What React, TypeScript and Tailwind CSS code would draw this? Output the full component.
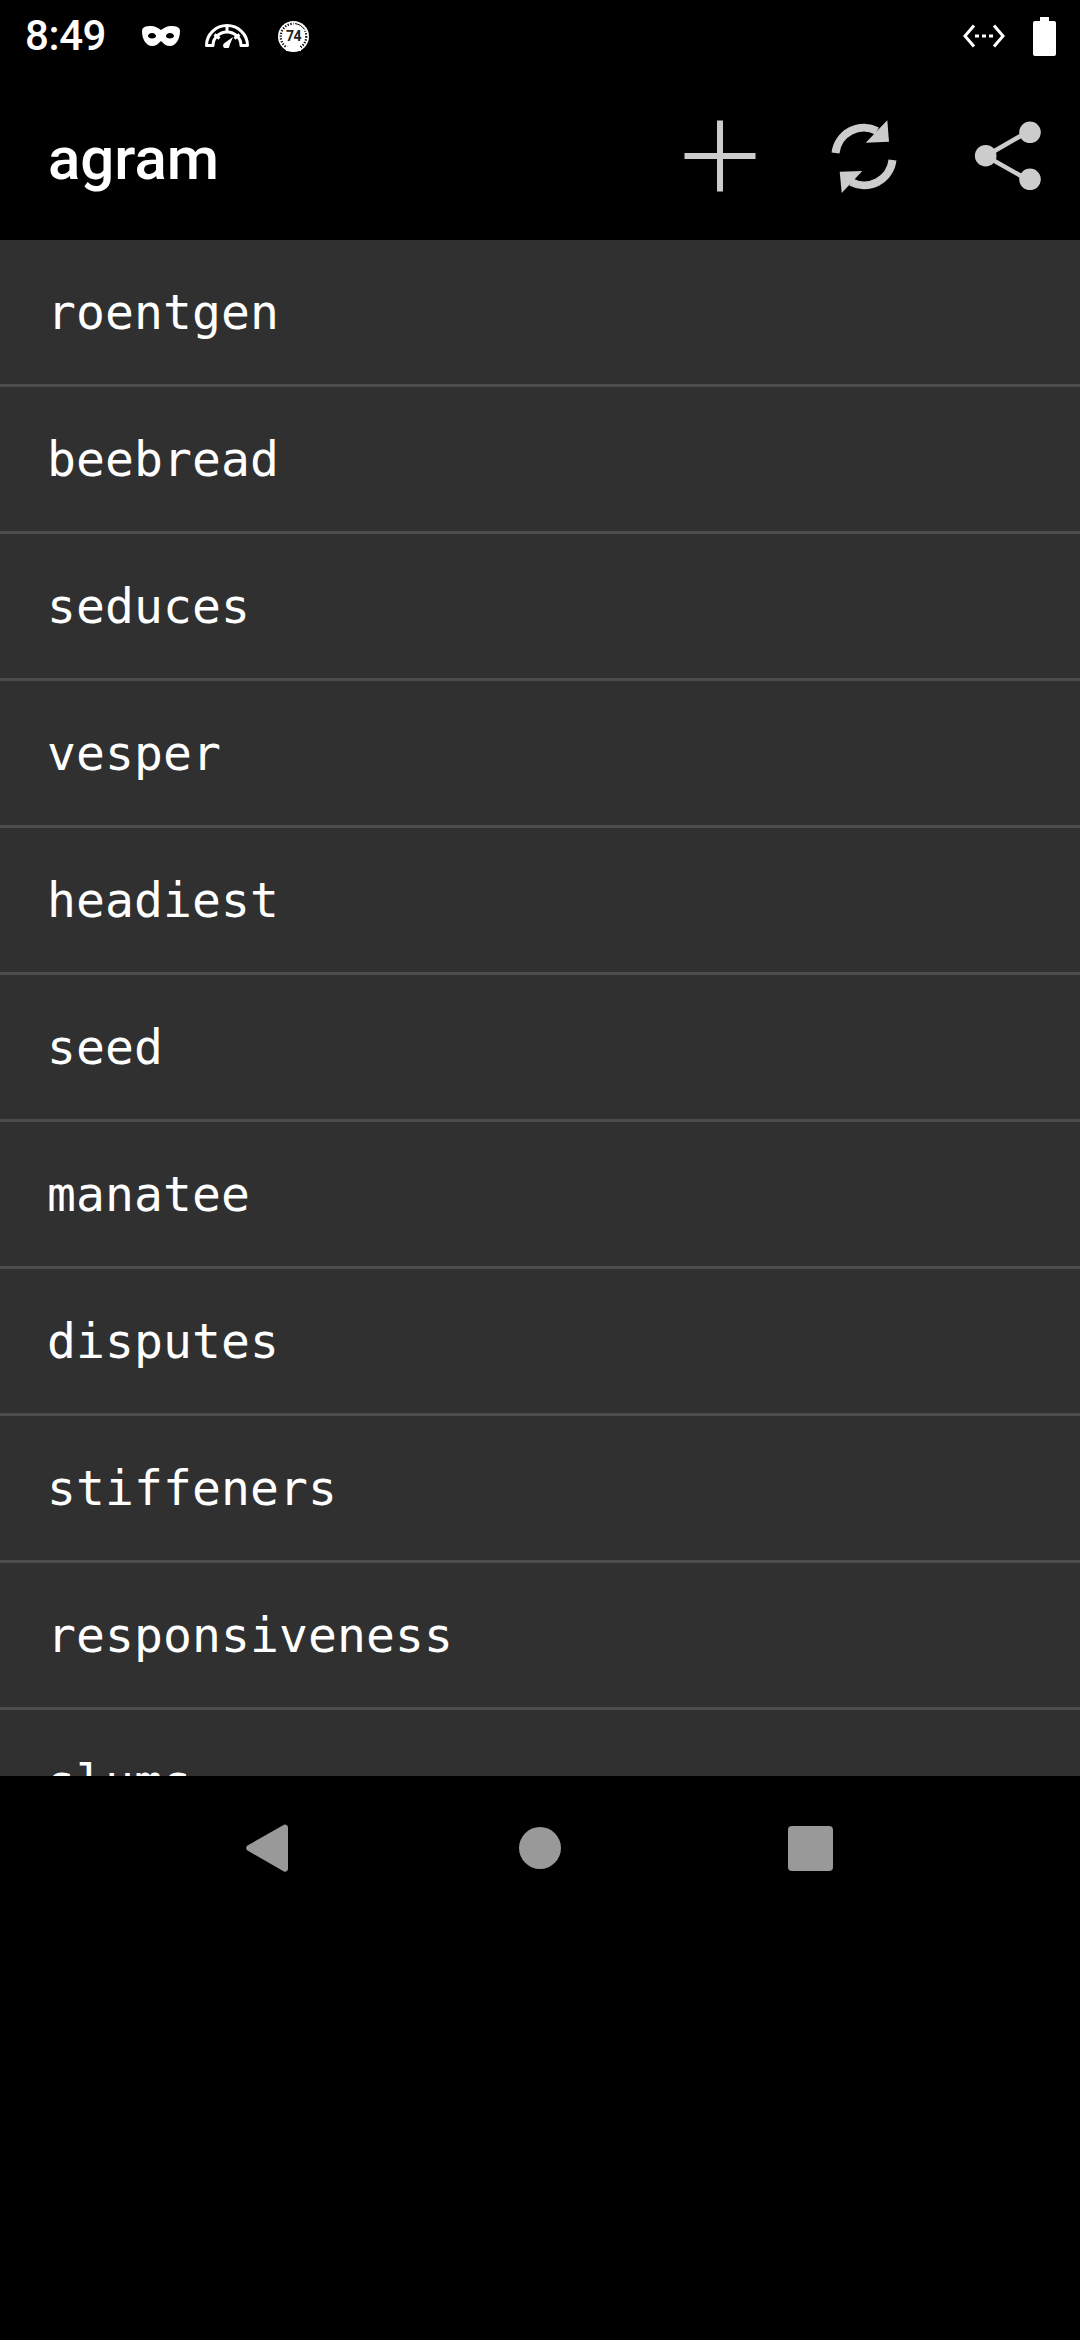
import React from "react";

const words = ["roentgen","beebread","seduces","vesper","headiest","seed","manatee","disputes","stiffeners","responsiveness","slums"];

function Mask() {
  return (
    <svg width="38" height="20" viewBox="0 0 38 20" className="block">
      <path fillRule="evenodd" fill="#fff" d="M9 0C13 0 16 2 19 4C22 2 25 0 29 0C34 0 38 1 38 5C38 13 34 20 28 20C24 20 22 18 19 15C16 18 14 20 10 20C4 20 0 13 0 5C0 1 4 0 9 0ZM10 7C7.5 7 6 8.5 6 10C6 11.5 8 12.5 10 12.5C12.5 12.5 14 11.5 14 10C14 8.5 12.5 7 10 7ZM28 7C25.5 7 24 8.5 24 10C24 11.5 25.5 12.5 28 12.5C30 12.5 32 11.5 32 10C32 8.5 30.5 7 28 7Z" />
    </svg>
  );
}

function Gauge() {
  return (
    <svg width="44" height="24" viewBox="0 0 44 24" className="block" fill="none" stroke="#fff" strokeWidth="3">
      <path d="M1.5 21.5A20.5 20 0 0 1 42.5 21.5H36A14 13.5 0 0 0 8 21.5Z" strokeLinejoin="round" />
      <path d="M9.5 10.5L14.5 14.5M22 1.5V8M34.5 10.5L29.5 14.5" />
      <path d="M28 13L24.5 21.5A3.2 3.2 0 1 1 19.5 19Z" fill="#fff" stroke="none" />
    </svg>
  );
}

function Badge() {
  return (
    <div className="relative h-[31px] w-[31px]">
      <svg width="31" height="31" viewBox="0 0 31 31" className="block">
        <circle cx="15.5" cy="15.5" r="15.5" fill="#fff" />
        <circle cx="15.5" cy="15.5" r="12.8" fill="none" stroke="#000" strokeWidth="2.2" strokeDasharray="1 1.2" pathLength="62" />
        <path d="M15.5 2.7A12.8 12.8 0 0 1 27 10" fill="none" stroke="#fff" strokeWidth="3" />
        <path d="M17 2.6A13 13 0 0 1 26.5 8.5" fill="none" stroke="#000" strokeWidth="1" />
        <path d="M8 28L23 28" stroke="#fff" strokeWidth="4" />
      </svg>
      <span className="absolute inset-0 flex items-center justify-center font-['Roboto',sans-serif] text-[14px] font-bold leading-none tracking-[-0.5px] text-[#222]">74</span>
    </div>
  );
}

function Code() {
  return (
    <svg width="42" height="24" viewBox="0 0 42 24" className="block" fill="none" stroke="#fff" strokeWidth="3">
      <path d="M11 1.5L2 12L11 22.5" />
      <path d="M31 1.5L40 12L31 22.5" />
      <path d="M12 12H16M19 12H23M26 12H30" />
    </svg>
  );
}

function Battery() {
  return (
    <svg width="23" height="39" viewBox="0 0 23 39" className="block">
      <path fill="#fff" d="M7 0H16V4H21A2 2 0 0 1 23 6V37A2 2 0 0 1 21 39H2A2 2 0 0 1 0 37V6A2 2 0 0 1 2 4H7Z" />
    </svg>
  );
}

function Plus() {
  return (
    <svg width="72" height="72" viewBox="0 0 72 72" className="block" fill="#ccc">
      <rect x="33" y="0.5" width="6" height="71" />
      <rect x="0.5" y="33" width="71" height="6" />
    </svg>
  );
}

function Refresh() {
  return (
    <svg width="90" height="90" viewBox="0 0 90 90" className="block">
      <g fill="none" stroke="#ccc" strokeWidth="8">
        <path d="M16.5 42A28.5 28.5 0 0 1 58 20" />
        <path d="M73.5 49A28.5 28.5 0 0 1 32 71" />
      </g>
      <path fill="#ccc" d="M68.3 9.3L70 30.7L46.7 31.7Z" />
      <path fill="#ccc" d="M22.7 82L20.7 60.7L43.3 60Z" />
    </svg>
  );
}

function Share() {
  return (
    <svg width="72" height="72" viewBox="0 0 72 72" className="block" fill="#ccc">
      <path d="M55 12.3L13.7 36L55 59.3" fill="none" stroke="#ccc" strokeWidth="4.5" />
      <circle cx="58" cy="12.3" r="10.8" />
      <circle cx="13.7" cy="35.7" r="10.8" />
      <circle cx="58" cy="59.3" r="10.8" />
    </svg>
  );
}

export default function App() {
  return (
    <div className="flex min-h-[2340px] w-[1080px] flex-col overflow-hidden bg-black">
      <div className="flex h-[72px] items-center justify-between text-white">
        <div className="flex items-center">
          <span className="ml-[25px] w-[117px] font-['Roboto',sans-serif] text-[42px] font-medium leading-none tracking-[-0.4px]">8:49</span>
          <Mask />
          <span className="ml-[25px]"><Gauge /></span>
          <span className="ml-[29px]"><Badge /></span>
        </div>
        <div className="flex items-center">
          <Code />
          <span className="ml-[28px] mr-[24px]"><Battery /></span>
        </div>
      </div>
      <div className="flex h-[168px] items-center justify-between pl-[48px]">
        <span className="pt-[5px] font-['Roboto',sans-serif] text-[60px] font-medium leading-none text-white">agram</span>
        <div className="flex">
          <div className="flex w-[144px] items-center justify-center"><Plus /></div>
          <div className="flex w-[144px] items-center justify-center"><Refresh /></div>
          <div className="flex w-[144px] items-center justify-center"><Share /></div>
        </div>
      </div>
      <div className="h-[1536px] overflow-hidden bg-[#303030]">
        {words.map((w) => (
          <div key={w} className="flex h-[147px] items-center border-b-[3px] border-[#4d4d4d] pl-[47px] font-['DejaVu_Sans_Mono',monospace] text-[48px] leading-none tracking-[0.1px] text-white">
            {w}
          </div>
        ))}
      </div>
      <div className="flex h-[144px] items-center justify-center">
        <div className="flex w-[270px] justify-center pr-[6px]">
          <svg width="42" height="48" viewBox="0 0 42 48" className="block" fill="#999">
            <path d="M39 0.5A3 3 0 0 1 42 3V45A3 3 0 0 1 38 47.5L1.5 26.5A3 3 0 0 1 1.5 21.5L38 0.7Z" />
          </svg>
        </div>
        <div className="flex w-[270px] justify-center">
          <div className="h-[42px] w-[42px] rounded-full bg-[#999]" />
        </div>
        <div className="flex w-[270px] justify-center">
          <div className="h-[45px] w-[45px] rounded-[4px] bg-[#999]" />
        </div>
      </div>
    </div>
  );
}
